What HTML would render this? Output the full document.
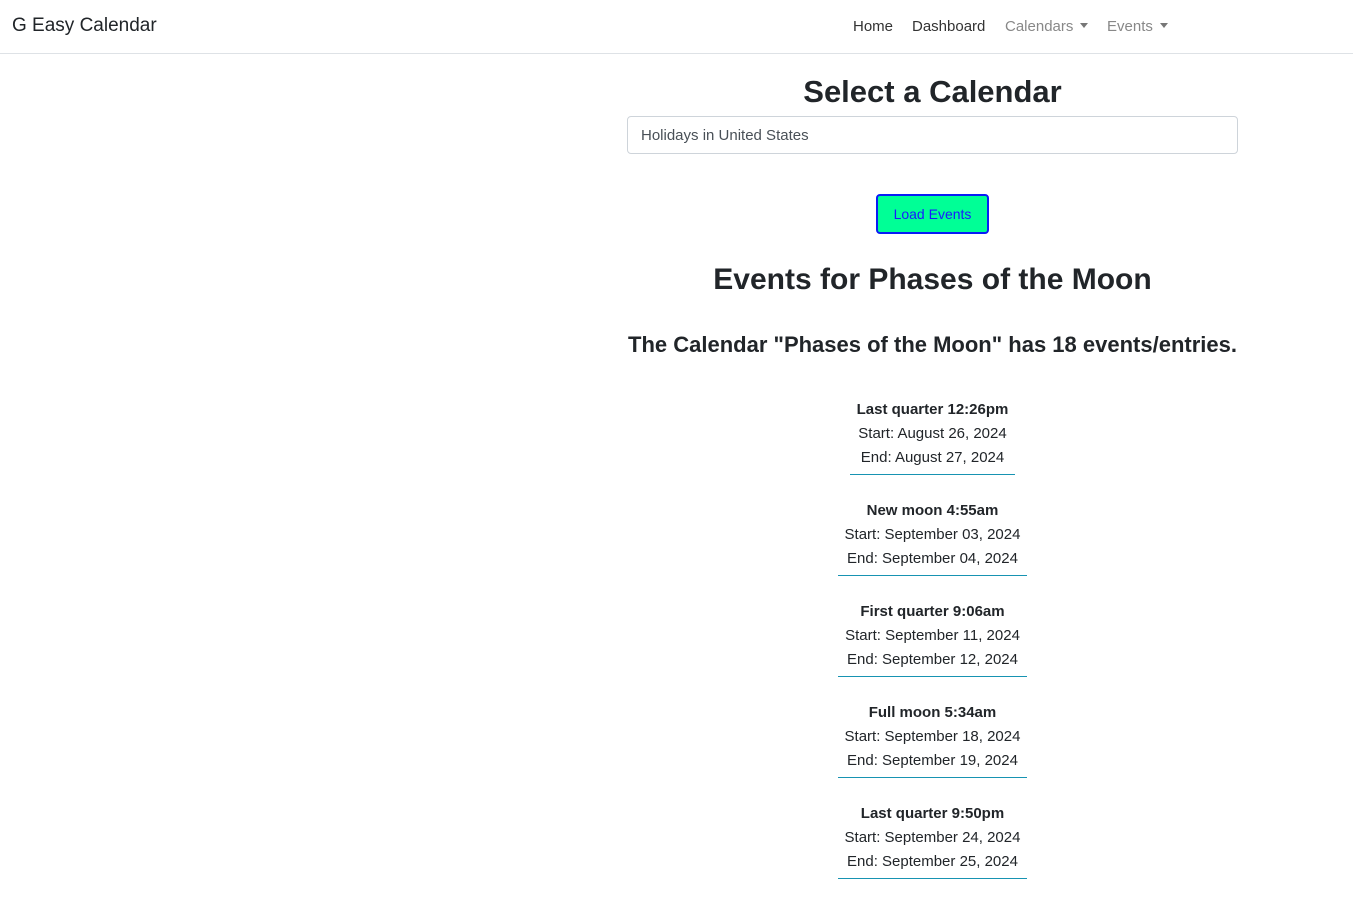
<!DOCTYPE html>
<html><head><meta charset="utf-8"><style>
body{margin:0;font-family:"Liberation Sans",sans-serif;color:#212529;background:#fff;width:1353px;height:897px;overflow:hidden;position:relative}
.nav{position:absolute;left:0;top:0;width:1353px;height:53px;border-bottom:1px solid #dee2e6}
.brand{position:absolute;left:12px;top:15px;font-size:19px;color:#212529}
.links{position:absolute;top:18px;font-size:15px}
.links span{position:absolute;white-space:nowrap}
.caret{display:inline-block;width:0;height:0;border-left:4px solid transparent;border-right:4px solid transparent;border-top:5px solid #777;margin-left:7px;vertical-align:3px}
.c{position:absolute;left:612px;width:641px;text-align:center}
h1,h2,h4{margin:0;font-weight:600}
.sel{position:absolute;left:627px;top:116px;width:609px;height:36px;border:1px solid #ced4da;border-radius:4px;font-size:15px;line-height:38px;text-indent:13px;color:#495057}
.btn{position:absolute;left:876px;top:194px;width:109px;height:36px;border:2px solid #0a1cf5;border-radius:4px;background:#00ff96;color:#1a1aff;font-size:14px;line-height:36px;text-align:center}
.ev{display:inline-block;border-bottom:1px solid #1793b2;font-size:15px;line-height:24px;padding:0 7px 4px}
.ev b{font-weight:700}
</style></head><body>
<div class="nav">
<div class="brand">G Easy Calendar</div>
<div class="links">
<span style="left:853px;color:#333">Home</span>
<span style="left:912px;color:#333">Dashboard</span>
<span style="left:1005px;color:#888">Calendars<i class="caret"></i></span>
<span style="left:1107px;color:#888">Events<i class="caret"></i></span>
</div></div>
<div class="c" style="top:74px"><h1 style="font-size:31px">Select a Calendar</h1></div>
<div class="sel">Holidays in United States</div>
<div class="btn">Load Events</div>
<div class="c" style="top:263px"><h2 style="font-size:30px">Events for Phases of the Moon</h2></div>
<div class="c" style="top:332px"><h4 style="font-size:22px;white-space:nowrap;margin-left:-20px;margin-right:-20px">The Calendar "Phases of the Moon" has 18 events/entries.</h4></div>
<div class="c" style="top:398px"><div class="ev"><b>Last quarter 12:26pm</b><br>Start: August 26, 2024<br>End: August 27, 2024</div></div>
<div class="c" style="top:499px"><div class="ev"><b>New moon 4:55am</b><br>Start: September 03, 2024<br>End: September 04, 2024</div></div>
<div class="c" style="top:600px"><div class="ev"><b>First quarter 9:06am</b><br>Start: September 11, 2024<br>End: September 12, 2024</div></div>
<div class="c" style="top:701px"><div class="ev"><b>Full moon 5:34am</b><br>Start: September 18, 2024<br>End: September 19, 2024</div></div>
<div class="c" style="top:802px"><div class="ev"><b>Last quarter 9:50pm</b><br>Start: September 24, 2024<br>End: September 25, 2024</div></div>
</body></html>
